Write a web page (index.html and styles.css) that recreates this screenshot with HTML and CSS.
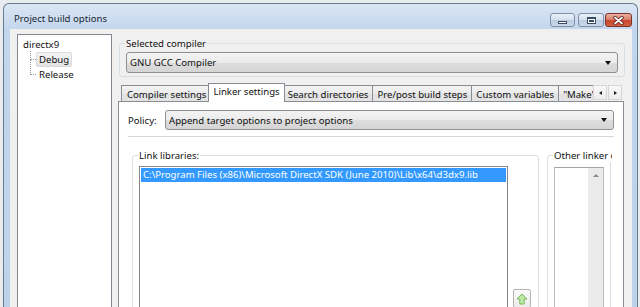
FILE: index.html
```html
<!DOCTYPE html>
<html lang="en">
<head>
    <meta charset="UTF-8">
    <title>Project build options</title>
    <link rel="stylesheet" href="styles.css">
</head>
<body>
    <div class="window">
        <div class="titlebar">
            <span class="title">Project build options</span>
            <div class="caption-buttons">
                <span class="cap-btn cap-min"><span class="min-glyph"></span></span>
                <span class="cap-btn cap-max"><span class="max-glyph"></span></span>
                <span class="cap-btn cap-close">
                    <svg width="11" height="9" viewBox="0 0 11 9">
                        <path d="M2 1.5 L9 7.5 M9 1.5 L2 7.5" stroke="#5b2118" stroke-width="3.4" stroke-linecap="round"/>
                        <path d="M2 1.5 L9 7.5 M9 1.5 L2 7.5" stroke="#fff" stroke-width="1.7" stroke-linecap="round"/>
                    </svg>
                </span>
            </div>
        </div>

        <div class="client">
            <!-- targets tree -->
            <div class="tree">
                <div class="tree-root">directx9</div>
                <ul class="tree-children">
                    <li><span class="tree-item selected">Debug</span></li>
                    <li><span class="tree-item">Release</span></li>
                </ul>
            </div>

            <div class="options">
                <fieldset class="group compiler-group">
                    <legend>Selected compiler</legend>
                    <div class="combo combo-tall">GNU GCC Compiler</div>
                </fieldset>

                <div class="tab-strip">
                    <div class="tab-list">
                        <span class="tab">Compiler settings</span>
                        <span class="tab active">Linker settings</span>
                        <span class="tab">Search directories</span>
                        <span class="tab">Pre/post build steps</span>
                        <span class="tab">Custom variables</span>
                        <span class="tab">"Make" commands</span>
                    </div>
                    <span class="tab-scroll"><span class="arrow-left"></span></span>
                    <span class="tab-scroll"><span class="arrow-right"></span></span>
                </div>

                <div class="tab-panel">
                    <div class="policy-row">
                        <label class="policy-label">Policy:</label>
                        <div class="combo">Append target options to project options</div>
                    </div>
                    <div class="separator"></div>

                    <div class="lists">
                        <fieldset class="group libs-group">
                            <legend>Link libraries:</legend>
                            <div class="libs-body">
                                <div class="listbox">
                                    <div class="list-item selected">C:\Program Files (x86)\Microsoft DirectX SDK (June 2010)\Lib\x64\d3dx9.lib</div>
                                </div>
                                <div class="list-buttons">
                                    <span class="small-btn">
                                        <svg width="12" height="12" viewBox="0 0 12 12">
                                            <path d="M6 1 L11 6 H8.2 V11 H3.8 V6 H1 Z" fill="#bfe9a6" stroke="#79b85c" stroke-width="1" stroke-linejoin="round"/>
                                        </svg>
                                    </span>
                                </div>
                            </div>
                        </fieldset>

                        <fieldset class="group other-group">
                            <legend>Other linker options:</legend>
                            <div class="textbox">
                                <div class="vscroll"><span class="scroll-up"></span></div>
                            </div>
                        </fieldset>
                    </div>
                </div>
            </div>
        </div>
    </div>
</body>
</html>
```

FILE: styles.css
```css
:root {
    --client-bg: #f0f0f0;
    --panel-border: #898c95;
    --group-border: #d5dfe5;
    --list-border: #828790;
    --select-blue: #3399ff;
}

* {
    box-sizing: border-box;
}

html,
body {
    margin: 0;
    height: 100%;
}

body {
    overflow: hidden;
    background: #e9ecef;
    font-family: "Noto Sans", sans-serif;
    font-size: 9.6px;
    line-height: 13px;
    color: #111;
}

/* window frame */

.window {
    margin: 3px 0 0 3px;
    width: 635px;
    height: 340px;
    padding: 0 5px 0 6px;
    display: flex;
    flex-direction: column;
    border: 1px solid #6b7b8f;
    border-bottom: 0;
    border-radius: 6px 6px 0 0;
    background: linear-gradient(#dae6f4, #c2d6ed 26px, #bcd2eb);
}

.titlebar {
    height: 25px;
    display: flex;
    align-items: flex-start;
}

.title {
    margin: 8px 0 0 4px;
    color: #1b2633;
}

.caption-buttons {
    margin: 9px 0 0 auto;
    display: flex;
}

.cap-btn {
    height: 14px;
    display: flex;
    align-items: center;
    justify-content: center;
    border: 1px solid #7f90a6;
    border-radius: 3px;
    background: linear-gradient(#e9f0f8, #d3dfee 50%, #bccde2 51%, #c9d8ea);
}

.cap-min {
    width: 25px;
    margin-right: 3px;
}

.cap-max {
    width: 26px;
    margin-right: 1px;
}

.cap-close {
    width: 27px;
    border-color: #7d3326;
    background: linear-gradient(#eab0a3, #d77a63 50%, #c7452c 51%, #d2603f);
}

.min-glyph {
    width: 9px;
    height: 3px;
    margin-top: 5px;
    background: #fff;
    border: 1px solid #3a4b61;
}

.max-glyph {
    width: 9px;
    height: 7px;
    background: #3a4b61;
    border: 1px solid #3a4b61;
    box-shadow: inset 0 0 0 1px #fff;
    border-top-width: 2px;
}

/* client area */

.client {
    flex: 1;
    display: flex;
    align-items: flex-start;
    padding: 5px 8px 0 7px;
    background: var(--client-bg);
}

.tree {
    width: 95px;
    height: 300px;
    margin-right: 6px;
    padding: 2px 0 0 5px;
    background: #fff;
    border: 1px solid var(--list-border);
}

.tree-root {
    height: 15px;
    line-height: 15px;
}

.tree-children {
    list-style: none;
    margin: 0 0 0 7px;
    padding: 0;
}

.tree-children li {
    position: relative;
    height: 15px;
    padding-left: 6px;
}

.tree-children li::before {
    content: "";
    position: absolute;
    left: 0;
    top: -1px;
    width: 5px;
    height: 8px;
    border-left: 1px dotted #9a9a9a;
    border-bottom: 1px dotted #9a9a9a;
}

.tree-children li:not(:last-child)::after {
    content: "";
    position: absolute;
    left: 0;
    top: 7px;
    height: 8px;
    border-left: 1px dotted #9a9a9a;
}

.tree-item {
    display: inline-block;
    height: 15px;
    padding: 0 2px;
    line-height: 14px;
    border: 1px solid transparent;
}

.tree-item.selected {
    background: linear-gradient(#f4f4f4, #e3e3e3);
    border-color: #d9d9d9;
    border-radius: 2px;
}

/* right hand side */

.options {
    width: 506px;
    padding-top: 3px;
}

.group {
    margin: 0;
    min-width: 0;
    border: 1px solid var(--group-border);
    border-radius: 3px;
}

.group legend {
    padding: 0 1px;
    margin-left: -1px;
    line-height: 13px;
}

.compiler-group {
    margin: 0 -1px 0 1px;
    padding: 2px 6px 3px;
}

.combo {
    position: relative;
    flex: 1;
    height: 20px;
    display: flex;
    align-items: center;
    padding: 0 20px 0 3px;
    border: 1px solid #8e8f8f;
    border-radius: 3px;
    background: linear-gradient(#f3f3f3, #ebebeb 50%, #dddddd 51%, #d5d5d5);
}

.combo-tall {
    height: 21px;
}

.combo::after {
    content: "";
    position: absolute;
    right: 6px;
    top: 50%;
    margin-top: -2px;
    border-left: 3.5px solid transparent;
    border-right: 3.5px solid transparent;
    border-top: 4px solid #111;
}

/* tabs */

.tab-strip {
    position: relative;
    z-index: 1;
    height: 19px;
    margin-top: 6px;
    padding-left: 3px;
    display: flex;
    align-items: flex-start;
}

.tab-list {
    width: 472px;
    height: 19px;
    display: flex;
    align-items: flex-end;
    overflow: hidden;
}

.tab {
    flex-shrink: 0;
    height: 16px;
    margin-right: -1px;
    margin-bottom: 1px;
    padding: 2px 4px 0;
    white-space: nowrap;
    border: 1px solid var(--panel-border);
    border-bottom: 0;
    background: linear-gradient(#f3f3f3, #ebebeb 50%, #e1e1e1 51%, #e4e4e4);
}

.tab:first-child {
    padding-left: 5px;
}

.tab.active {
    position: relative;
    z-index: 1;
    height: 19px;
    margin: 0 -2px 0 -2px;
    padding: 1px 4px 0;
    background: #fff;
}

.tab-scroll {
    width: 14px;
    height: 15px;
    margin: 2px 1px 0 0;
    display: flex;
    align-items: center;
    justify-content: center;
    border: 1px solid #d6d6d6;
    background: linear-gradient(#f8f8f8, #ececec);
}

.arrow-left,
.arrow-right {
    border-top: 2.5px solid transparent;
    border-bottom: 2.5px solid transparent;
}

.arrow-left {
    border-right: 3px solid #222;
}

.arrow-right {
    border-left: 3px solid #222;
}

.tab-panel {
    height: 230px;
    margin-top: -1px;
    padding: 8px 9px 0;
    background: #fff;
    border: 1px solid var(--panel-border);
}

.policy-row {
    height: 20px;
    display: flex;
    align-items: center;
}

.policy-label {
    width: 37px;
}

.separator {
    margin-top: 6px;
    border-top: 1px solid #d5d5d5;
    border-bottom: 1px solid #fff;
}

.lists {
    margin-top: 11px;
    padding-left: 4px;
    display: flex;
    align-items: flex-start;
}

.libs-group {
    width: 407px;
    height: 200px;
    margin-right: 8px;
    padding: 4px 0 0 6px;
}

.libs-body {
    display: flex;
    align-items: flex-start;
}

.listbox {
    width: 369px;
    height: 180px;
    padding: 1px;
    background: #fff;
    border: 1px solid var(--list-border);
}

.list-item {
    height: 14px;
    padding-left: 2px;
    line-height: 14px;
    white-space: nowrap;
    overflow: hidden;
}

.list-item.selected {
    background: var(--select-blue);
    color: #fff;
}

.list-buttons {
    padding: 123px 0 0 5px;
}

.small-btn {
    width: 18px;
    height: 19px;
    display: flex;
    align-items: center;
    justify-content: center;
    border: 1px solid #b5b5b5;
    border-radius: 2px;
    background: linear-gradient(#fafafa, #ececec);
}

.other-group {
    width: 64px;
    height: 200px;
    padding: 5px 0 0 6px;
}

.other-group legend {
    width: 59px;
    overflow: hidden;
    white-space: nowrap;
}

.textbox {
    width: 50px;
    height: 180px;
    display: flex;
    justify-content: flex-end;
    border: 1px solid #b9bcc2;
    border-top-color: #a3a6ad;
    background: #fff;
}

.vscroll {
    width: 15px;
    display: flex;
    justify-content: center;
    padding-top: 6px;
    background: #ebebeb;
}

.scroll-up {
    width: 0;
    height: 0;
    border-left: 3px solid transparent;
    border-right: 3px solid transparent;
    border-bottom: 3px solid #8a8a8a;
}
```
